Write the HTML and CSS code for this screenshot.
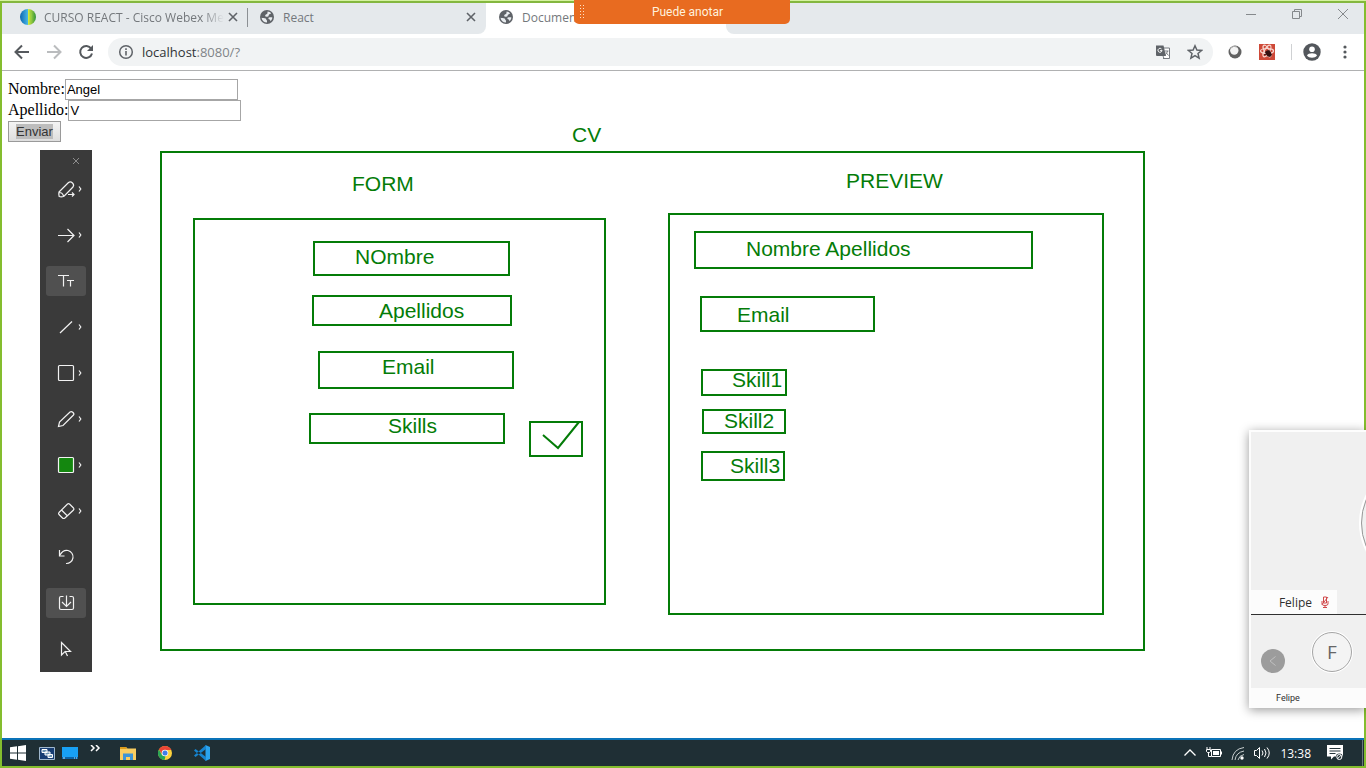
FILE: index.html
```html
<!DOCTYPE html>
<html lang="es">
<head>
<meta charset="utf-8">
<meta name="viewport" content="width=device-width, initial-scale=1">
<title>Document</title>
<link rel="stylesheet" href="styles.css">
</head>
<body>
<svg class="defs" aria-hidden="true">
  <symbol id="globe" viewBox="0 0 16 16">
    <circle cx="8" cy="8" r="7" fill="#5f6368"/>
    <path d="M2.500 8.800c1.200.3 3 .2 4.200.8.700.5.300 1.600 1.300 1.900v2c-3 0-5-1.800-5.500-4.700zM8.600 2.600c1.400.1 2.600.700 3.500 1.700-.5 1.100-1.700.7-2.200 1.500-.5.7.1 1.500-.9 1.800-.9.300-1.600-.3-2.500-.2-.6-.7-.3-1.400.4-1.900.8-.5 1.400-.4 1.500-1.200zM9.500 8.700c1.300-.5 2.600-.5 3.900-.2-.1 1.500-.9 2.900-2 3.700-.2-.8-.1-1.500-.8-1.700-.8-.2-1.500-.8-1.100-1.800z" fill="#e8ecef"/>
  </symbol>
  <symbol id="close" viewBox="0 0 10 10"><path d="M1 1l8 8M9 1L1 9" stroke="#5f6368" stroke-width="1.600" fill="none"/></symbol>
</svg>

<header class="browser">
  <nav class="tabs">
    <div class="tab tab-first">
      <svg class="icon16" viewBox="0 0 16 16">
        <defs><linearGradient id="wx" x1="0" x2="1"><stop offset="0" stop-color="#0e68b0"/><stop offset=".48" stop-color="#46b4e4"/><stop offset=".52" stop-color="#d6ea3a"/><stop offset="1" stop-color="#2e9440"/></linearGradient></defs>
        <circle cx="8" cy="8" r="8" fill="url(#wx)"/><path d="M9 0c4 3 4 12 0 16 3-4 2-12 0-16z" fill="#8fd04a" opacity=".8"/>
      </svg>
      <a class="tab-title fade" href="#">CURSO REACT - Cisco Webex Me</a>
      <button class="x" aria-label="Cerrar"><svg viewBox="0 0 10 10"><use href="#close"/></svg></button>
    </div>
    <div class="tab tab-second">
      <svg class="icon16"><use href="#globe"/></svg>
      <a class="tab-title" href="#">React</a>
      <button class="x" aria-label="Cerrar"><svg viewBox="0 0 10 10"><use href="#close"/></svg></button>
    </div>
    <div class="tab tab-active">
      <svg class="icon16"><use href="#globe"/></svg>
      <a class="tab-title" href="#">Document</a>
    </div>
    <div class="strip-end">
      <button aria-label="Minimizar"><svg viewBox="0 0 12 12"><path d="M1 6.500h10" /></svg></button>
      <button aria-label="Restaurar"><svg viewBox="0 0 12 12"><path d="M1.500 3.500h7v7h-7zM3.500 3.500v-2h7v7h-2"/></svg></button>
      <button aria-label="Cerrar ventana"><svg viewBox="0 0 12 12"><path d="M1 1l10 10M11 1L1 11"/></svg></button>
    </div>
  </nav>
  <div class="toolbar">
    <button aria-label="Atrás"><svg viewBox="0 0 16 16"><path d="M15 8H2M8 1.500L1.500 8 8 14.500" fill="none" stroke="#55595d" stroke-width="2"/></svg></button>
    <button aria-label="Adelante"><svg viewBox="0 0 16 16"><path d="M1 8h13M8 1.500L14.500 8 8 14.500" fill="none" stroke="#babcbe" stroke-width="2"/></svg></button>
    <button aria-label="Recargar"><svg viewBox="0 0 16 16"><path d="M13.200 4.600A6 6 0 1 0 14 9.500" fill="none" stroke="#55595d" stroke-width="2"/><path d="M15 1v6H9z" fill="#55595d"/></svg></button>
    <div class="address">
      <svg class="icon16" viewBox="0 0 16 16"><circle cx="8" cy="8" r="6.300" fill="none" stroke="#5f6368" stroke-width="1.500"/><path d="M8 7v4.500M8 4.300v1.600" stroke="#5f6368" stroke-width="1.600"/></svg>
      <span class="url">localhost<span>:8080/?</span></span>
      <svg class="icon16" viewBox="0 0 16 16"><path d="M6 4h8.500v10.500H8" fill="#fff" stroke="#777b80"/><path d="M1 1.500h7.500L11 12H2a1 1 0 0 1-1-1z" fill="#5f6368"/><path d="M7 6.300A2 2 0 1 1 6.500 5M5 6.700h2" fill="none" stroke="#fff"/><path d="M9.500 7h4M12.500 7c-.5 2-1.500 3-2.500 4M11 8.500l2.500 3M8 12l1 2.500" fill="none" stroke="#777b80"/></svg>
      <svg class="icon16" viewBox="0 0 16 16"><path d="M8 1.800l1.900 4.300 4.700.4-3.600 3 1.100 4.600L8 11.700l-4.100 2.400L5 9.500l-3.600-3 4.700-.4z" fill="none" stroke="#5f6368" stroke-width="1.500"/></svg>
    </div>
    <button class="ext" aria-label="Webex"><svg viewBox="0 0 16 16"><circle cx="8" cy="8" r="6.500" fill="#626262"/><circle cx="7.300" cy="6.500" r="4.200" fill="#f4f4f4"/><path d="M4 4a5 5 0 0 1 6-1" stroke="#aaa" fill="none"/></svg></button>
    <button class="ext" aria-label="React Developer Tools"><svg viewBox="0 0 16 16"><path d="M0 0h16v16H0z" fill="#ce4938"/><g fill="none" stroke="#f7d7d0" stroke-width="1.200"><ellipse cx="8" cy="7" rx="6.500" ry="2.500"/><ellipse cx="8" cy="7" rx="6.500" ry="2.500" transform="rotate(60 8 7)"/><ellipse cx="8" cy="7" rx="6.500" ry="2.500" transform="rotate(120 8 7)"/></g><ellipse cx="9.500" cy="9.500" rx="2.500" ry="3.500" transform="rotate(-35 9.500 9.500)" fill="#351111"/><path d="M6 8l7 3M10 6l1 7M5 11l7-3" stroke="#351111"/></svg></button>
    <span class="divider"></span>
    <button class="avatar" aria-label="Perfil"><svg viewBox="0 0 18 18"><circle cx="9" cy="9" r="8.700" fill="#53575c"/><circle cx="9" cy="6.300" r="2.800" fill="#fff"/><path d="M4 12.500c1-3 9-3 10 0-2 3-8 3-10 0z" fill="#fff"/></svg></button>
    <button aria-label="Menú"><svg viewBox="0 0 16 16"><g fill="#55595d"><circle cx="8" cy="3" r="1.600"/><circle cx="8" cy="8" r="1.600"/><circle cx="8" cy="13" r="1.600"/></g></svg></button>
  </div>
</header>

<main class="page">
  <form class="person">
    <div><label for="nombre">Nombre:</label><input id="nombre" type="text" value="Angel"></div>
    <div><label for="apellido">Apellido:</label><input id="apellido" type="text" value="V"></div>
    <button type="button"><span>Enviar</span></button>
  </form>
</main>

<footer class="taskbar">
  <button class="t-start" aria-label="Inicio"><svg viewBox="0 0 16 16"><path d="M0 2.300L7 1.300v6.200H0zM8 1.200L16 0v7.500H8zM0 8.500h7v6.200l-7-1zM8 8.500h8V16l-8-1.200z" fill="#fff"/></svg></button>
  <button class="t-quick" aria-label="Vista de tareas"><svg viewBox="0 0 16 16"><path d="M.5 2.500h15v12H.5z" fill="#173d73" stroke="#9fb7ce"/><path d="M3 4.500h5v3H3zM6 7h5v3H6zM9 9.500h4.500v3H9z" fill="#6f96b5" stroke="#fff"/></svg></button>
  <button class="t-quick" aria-label="Escritorio"><svg viewBox="0 0 16 16"><path d="M0 2h16v12H0z" fill="#18a0f5"/><path d="M0 12h16v2H0z" fill="#0b63a8"/><path d="M1 13h2M12 13h1M14 13h1" stroke="#bfe6ff"/></svg></button>
  <button class="t-more" aria-label="Más"><svg viewBox="0 0 16 16"><path d="M4 0l3 3-3 3M9 0l3 3-3 3" fill="none" stroke="#fff" stroke-width="1.500"/></svg></button>
  <button class="t-app" aria-label="Explorador"><svg viewBox="0 0 16 16"><path d="M0 2h6l1.500 1.500H16V15H0z" fill="#f9cd61"/><path d="M0 2h6l1 2H0z" fill="#dc9c1c"/><path d="M3 15V8.500h10V15h-3v-3H6v3z" fill="#3d94d6"/></svg></button>
  <button class="t-app" aria-label="Chrome"><svg viewBox="0 0 16 16"><circle cx="8" cy="8" r="7" fill="#fdd23c"/><path d="M1.900 4.500A7 7 0 0 1 14.100 4.500L14.300 5H8L5 9z" fill="#e84536"/><path d="M1.900 4.500L5 10l3.500 1.400L7.500 15A7 7 0 0 1 1.900 4.500z" fill="#26a657"/><circle cx="8" cy="8" r="3.300" fill="#f7f7f7"/><circle cx="8" cy="8" r="2.500" fill="#3f7de8"/></svg></button>
  <button class="t-app" aria-label="Visual Studio Code"><svg viewBox="0 0 16 16"><path d="M11.500 0L16 2v12l-4.500 2z" fill="#2aa3ee"/><path d="M0 5.500L1.500 4 12 12v4zM0 10.500L1.500 12 12 4V0z" fill="#1684d0"/></svg></button>
  <div class="tray">
    <svg viewBox="0 0 16 16"><path d="M2.500 10.500L8 5l5.500 5.500" fill="none" stroke="#fff" stroke-width="1.300"/></svg>
    <svg viewBox="0 0 16 16"><path d="M5.500 4.500h9v7h-9z" fill="none" stroke="#fff"/><path d="M7 6h6v4H7zM15 6.500h1v3h-1z" fill="#fff"/><path d="M1 2v2M4 2v2M.5 4.500h4v2l-1 1h-2l-1-1zM2.500 7v4.500H5" fill="none" stroke="#fff"/></svg>
    <svg viewBox="0 0 16 16"><g fill="none" stroke="#c5cccd"><path d="M2 15Q3 4 14 2.500"/><path d="M5 15Q6 7.500 14 6"/><path d="M8 15Q9 10.500 14 9.500"/></g><circle cx="12" cy="13" r="1.700" fill="#fff"/></svg>
    <svg viewBox="0 0 16 16"><path d="M.5 5.500h2l3-3v11l-3-3h-2zM8 5.500q2 2.500 0 5M10.500 4q3 4 0 8M13 2.500q4.500 5.500 0 11" fill="none" stroke="#fff"/></svg>
    <time>13:38</time>
    <svg viewBox="0 0 16 16"><path d="M0 0h16v11.500h-9L4 14.500v-3H0z" fill="#fff"/><path d="M2.500 3.500h11M2.500 6h11M2.500 8.500h6" stroke="#26363c"/><circle cx="12.300" cy="12" r="3.400" fill="#26363c"/><circle cx="12.300" cy="12" r="2.500" fill="none" stroke="#fff"/><path d="M10.500 13.700L14 10.300" stroke="#fff"/></svg>
    <span class="peek"></span>
  </div>
</footer>

<svg class="drawing" role="img" aria-label="CV">
  <g class="boxes">
    <rect x="161" y="152" width="983" height="498"/>
    <rect x="194" y="219" width="411" height="385"/>
    <rect x="314" y="242" width="195" height="33"/>
    <rect x="313" y="296" width="198" height="29"/>
    <rect x="319" y="352" width="194" height="36"/>
    <rect x="310" y="414" width="194" height="29"/>
    <rect x="530" y="422" width="52" height="34"/>
    <path d="M543 435l15 13 21-26"/>
    <rect x="669" y="214" width="434" height="400"/>
    <rect x="695" y="232" width="337" height="36"/>
    <rect x="701" y="297" width="173" height="34"/>
    <rect x="702" y="370" width="84" height="25"/>
    <rect x="703" y="410" width="82" height="23"/>
    <rect x="702" y="452" width="82" height="28"/>
  </g>
  <text x="572" y="142">CV</text>
  <text x="352" y="191">FORM</text>
  <text x="355" y="264">NOmbre</text>
  <text x="379" y="318">Apellidos</text>
  <text x="382" y="374">Email</text>
  <text x="388" y="433">Skills</text>
  <text x="846" y="188">PREVIEW</text>
  <text x="746" y="256">Nombre Apellidos</text>
  <text x="737" y="322">Email</text>
  <text x="732" y="387">Skill1</text>
  <text x="724" y="428">Skill2</text>
  <text x="730" y="473">Skill3</text>
</svg>

<aside class="tools">
  <button class="tools-close" aria-label="Cerrar"><svg viewBox="0 0 8 8"><path d="M1 1l6 6M7 1L1 7"/></svg></button>
  <button aria-label="Resaltador"><svg viewBox="0 0 40 30"><path d="M13 18L22.500 8.500q2-1.500 4 .5t.5 4L18 22.200q-2.500 1-4.800.3-.8-2-.2-4.500zM13.500 18.500q3 0 4 3.500M22 20.500h6M26 18.500l2 2-2 2"/><path class="chev" d="M33 12.500l1.800 2.500-1.800 2.500"/></svg></button>
  <button aria-label="Flecha"><svg viewBox="0 0 40 30"><path d="M12 15.500h16M21.500 9l6.500 6.500-6.500 6.500"/><path class="chev" d="M33 12.500l1.800 2.500-1.800 2.500"/></svg></button>
  <button class="on" aria-label="Texto"><svg viewBox="0 0 40 30"><path d="M12 9.500h11M17.500 9.500v11M21 14.500h7M24.500 14.500v6"/></svg></button>
  <button aria-label="Línea"><svg viewBox="0 0 40 30"><path d="M14 21L26 9.500"/><path class="chev" d="M33 12.500l1.800 2.500-1.800 2.500"/></svg></button>
  <button aria-label="Rectángulo"><svg viewBox="0 0 40 30"><rect x="12.500" y="7.500" width="15" height="15" rx="1"/><path class="chev" d="M33 12.500l1.800 2.500-1.800 2.500"/></svg></button>
  <button aria-label="Lápiz"><svg viewBox="0 0 40 30"><path d="M12.500 22.500l1-4.500L24 8q1.500-1 3 .5t.5 2.500L17 21.500z"/><path class="chev" d="M33 12.500l1.800 2.500-1.800 2.500"/></svg></button>
  <button aria-label="Color"><svg viewBox="0 0 40 30"><rect class="swatch" x="12.500" y="7.500" width="15" height="15" rx="1"/><path class="chev" d="M33 12.500l1.800 2.500-1.800 2.500"/></svg></button>
  <button aria-label="Borrador"><svg viewBox="0 0 40 30"><path d="M13 16.500L21.500 8q1-.7 2 0l4 4q.8 1 0 2L19 22q-1.500 1-2.500 0L13 18.500q-.8-1 0-2zM15.500 14l6 6"/><path class="chev" d="M33 12.500l1.800 2.500-1.800 2.500"/></svg></button>
  <button aria-label="Deshacer"><svg viewBox="0 0 40 30"><path d="M13.500 8v6h5M14 13q3-5.500 8-4.500a6.600 6.600 0 0 1-2 13"/></svg></button>
  <button class="on" aria-label="Guardar"><svg viewBox="0 0 40 30"><path d="M17.500 8.500H15q-1.500 0-1.500 1.500v10q0 1.500 1.500 1.500h11q1.500 0 1.500-1.500V10q0-1.500-1.500-1.500h-2.500M20.500 7.500v11M16 14l4.500 4.500L25 14"/></svg></button>
  <button aria-label="Puntero"><svg viewBox="0 0 40 30"><path d="M15.500 8.500v12.500l3.500-3.500h5.500zM19 17l2.500 5"/></svg></button>
</aside>

<div class="frame"></div>

<div class="banner"><svg viewBox="0 0 6 16"><path d="M1.500 1v14M4.500 1v14"/></svg><span>Puede anotar</span></div>

<aside class="video">
  <div class="speaker">
    <span class="halo"></span>
    <div class="nameplate">Felipe <svg viewBox="0 0 8 12"><path d="M2.500 1h3v6h-3zM1 5v3q0 1.500 3 1.500t3-1.500V5M4 9.500v2M2 11.500h4M7 1L1 8.500"/></svg></div>
  </div>
  <div class="filmstrip">
    <button class="prev" aria-label="Anterior"><svg viewBox="0 0 24 24"><path d="M14.500 7.500L9 12l5.500 4.500"/></svg></button>
    <span class="initial">F</span>
  </div>
  <div class="caption">Felipe</div>
</aside>
</body>
</html>
```
FILE: styles.css
```css
* { box-sizing: border-box; }

body {
  margin: 0;
  min-height: 100vh;
  display: flex;
  flex-direction: column;
  overflow: hidden;
  background: #fff;
  font-family: "Open Sans", "Noto Sans", sans-serif;
  font-size: 12px;
}

button {
  margin: 0;
  padding: 0;
  border: 0;
  background: none;
  font: inherit;
  flex: none;
}

svg { display: block; flex: none; }
a { color: inherit; text-decoration: none; }
.defs { position: absolute; width: 0; height: 0; }
.icon16 { width: 16px; height: 16px; }

/* Browser chrome */
.browser { border-bottom: 1px solid #b0b1b2; }
.tabs { display: flex; height: 34px; color: #74787c; background: #fff; }
.tab {
  display: flex;
  align-items: center;
  gap: 8px;
  width: 246px;
  padding: 0 6px 0 20px;
  background: #e5e9ec;
}
.tab-second {
  width: 240px;
  padding-left: 13px;
  border-radius: 0 0 8px 0;
  background: linear-gradient(#8c9094, #8c9094) 1px 8px / 1px 19px no-repeat #e5e9ec;
}
.tab-active { padding-left: 12px; width: 240px; background: #fff; }
.tab-title { flex: 1; white-space: nowrap; }
.tab-first .x { margin-left: -8px; }
.fade { -webkit-mask-image: linear-gradient(90deg, #000 88%, transparent); mask-image: linear-gradient(90deg, #000 88%, transparent); }
.x svg { width: 10px; height: 10px; }
.x { padding: 4px; }
.strip-end {
  flex: 1;
  display: flex;
  justify-content: flex-end;
  align-items: center;
  gap: 34px;
  padding: 0 17px 6px 0;
  border-radius: 0 0 0 8px;
  background: #e5e9ec;
}
.strip-end svg { width: 12px; height: 12px; fill: none; stroke: #85898c; }

.toolbar {
  display: flex;
  align-items: center;
  gap: 16px;
  height: 36px;
  padding: 0 13px 0 14px;
}
.toolbar svg { width: 16px; height: 16px; }
.toolbar .avatar svg { width: 18px; height: 18px; }
.toolbar .avatar { margin-left: -5px; }
.address {
  flex: 1;
  display: flex;
  align-items: center;
  gap: 16px;
  height: 28px;
  margin: 0 -2px;
  padding: 0 10px;
  border-radius: 14px;
  background: #f1f3f4;
}
.url { flex: 1; margin-left: -8px; font-size: 13px; color: #303337; }
.url span { color: #808488; }
.divider { width: 1px; height: 16px; background: #cfd1d3; }

/* Page */
.page { flex: 1; padding: 8px; font-family: "Liberation Serif", serif; font-size: 16px; }
.person div { display: flex; align-items: center; height: 21px; line-height: 18px; }
.person label { padding-bottom: 1px; }
.person input {
  width: 173px;
  height: 21px;
  padding: 1px;
  border: 1px solid #a6a6a6;
  font: 13px "Liberation Sans", sans-serif;
}
.person button {
  display: block;
  height: 21px;
  padding: 0 7px;
  border: 1px solid #9a9a9a;
  background: linear-gradient(#f4f4f4, #dedede);
  color: #333;
  font: 13px "Liberation Sans", sans-serif;
}
.person button span { background: #bdbdbd; }

/* Taskbar */
.taskbar {
  display: flex;
  align-items: center;
  height: 30px;
  padding: 0 2px 2px 1px;
  border-top: 2px solid #0a73b8;
  background: #1f2f35;
}
.taskbar svg { width: 16px; height: 16px; margin: 0 auto; }
.t-start { width: 34px; }
.t-quick { width: 23px; }
.t-more { width: 28px; }
.t-app { width: 37px; }
.tray { display: flex; align-items: center; gap: 8px; margin-left: auto; color: #fff; }
.tray time { padding: 0 8px 0 2px; }
.peek { width: 1px; height: 26px; margin-left: 11px; margin-right: 1px; background: #6a777c; }

/* Annotations over the shared page */
.drawing {
  position: absolute;
  inset: 0;
  width: 100%;
  height: 100%;
  pointer-events: none;
  fill: #047c08;
  font-family: "Liberation Sans", Arial, sans-serif;
  font-size: 21px;
}
.boxes { fill: none; stroke: #047c08; stroke-width: 2; }

.tools {
  position: absolute;
  left: 40px;
  top: 150px;
  width: 52px;
  display: flex;
  flex-direction: column;
  align-items: center;
  gap: 16px;
  padding-bottom: 8px;
  background: #3a3a3a;
}
.tools button { border-radius: 3px; }
.tools .on { background: #505050; }
.tools svg { width: 40px; height: 30px; fill: none; stroke: #f2f2f2; stroke-width: 1.200; }
.tools .swatch { fill: #14870f; }
.tools .tools-close { align-self: flex-end; padding: 7px 12px 5px; margin-bottom: -12px; }
.tools .tools-close svg { width: 8px; height: 8px; stroke: #8d8d8d; stroke-width: 1; }

.frame {
  position: absolute;
  inset: 0;
  border: 2px solid #84bd2e;
  border-top: 3px solid #84b73f;
  pointer-events: none;
}
.frame::before { content: ""; position: absolute; left: -2px; right: -2px; top: -3px; height: 1px; background: #d5f2a0; }

.banner {
  position: absolute;
  left: 50%;
  top: 0;
  width: 216px;
  height: 24px;
  margin-left: -109px;
  display: flex;
  align-items: center;
  padding: 0 0 0 5px;
  border-radius: 0 0 5px 5px;
  background: #e86b20;
  color: #fff1dc;
  font: 12px Roboto, sans-serif;
}
.banner svg { width: 6px; height: 16px; stroke: #ffe2c4; stroke-dasharray: 1 2; }
.banner span { flex: 1; text-align: center; }

.video {
  position: absolute;
  right: 0;
  top: 430px;
  width: 117px;
  border: solid #fdfdfd;
  border-width: 2px 0 0 2px;
  background: #f0f0f0;
  box-shadow: 0 2px 10px rgba(0, 0, 0, .4);
  color: #303030;
  font-family: "Open Sans", sans-serif;
}
.speaker {
  position: relative;
  display: flex;
  align-items: flex-end;
  height: 183px;
  overflow: hidden;
  border-bottom: 1px solid #303030;
}
.halo {
  position: absolute;
  left: 110px;
  top: 31px;
  width: 120px;
  height: 120px;
  border: 1px solid #999;
  border-radius: 50%;
  box-shadow: 0 0 0 2px #fff;
}
.nameplate {
  display: flex;
  align-items: center;
  justify-content: flex-end;
  gap: 9px;
  width: 86px;
  height: 24px;
  padding-right: 8px;
  background: #fcfcfc;
  font-size: 12px;
}
.nameplate svg { width: 8px; height: 12px; fill: none; stroke: #d0484a; }
.filmstrip { display: flex; align-items: center; gap: 27px; height: 73px; padding-left: 10px; }
.prev { margin-top: 18px; border-radius: 50%; background: #9c9c9c; }
.prev svg { width: 24px; height: 24px; fill: none; stroke: #c0c0c0; }
.initial {
  display: grid;
  place-items: center;
  width: 40px;
  height: 40px;
  border: 1px solid #a5a5a5;
  border-radius: 50%;
  box-shadow: 0 0 0 1px #fff;
  background: #f4f4f4;
  color: #666;
  font-size: 19px;
}
.caption { height: 20px; padding-left: 25px; background: #fcfcfc; font: 9px/20px Roboto, sans-serif; }
```
